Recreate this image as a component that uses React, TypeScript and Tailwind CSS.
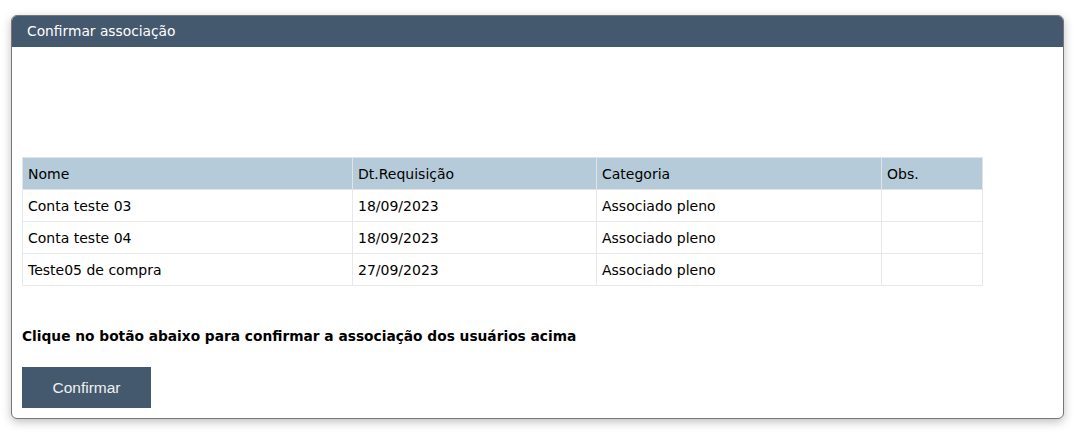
import React from "react";

const rows = [
  { nome: "Conta teste 03", data: "18/09/2023", categoria: "Associado pleno", obs: "" },
  { nome: "Conta teste 04", data: "18/09/2023", categoria: "Associado pleno", obs: "" },
  { nome: "Teste05 de compra", data: "27/09/2023", categoria: "Associado pleno", obs: "" },
];

export default function App() {
  return (
    <div className="min-h-[440px] w-[1076px] bg-white pl-[11px] pt-[15px] font-['DejaVu_Sans',Verdana,sans-serif] text-[14px] text-black">
      <div className="w-[1053px] h-[404px] rounded-[6px] border border-[#7a7474] bg-white shadow-[0_3px_10px_rgba(0,0,0,0.25)] overflow-hidden">
        <div className="h-[31px] bg-[#44596e] pl-[15px] flex items-center text-white text-[13.8px]">
          Confirmar associação
        </div>
        <div className="px-[10px] pt-[110px]">
          <table className="w-[960px] border-collapse table-fixed">
            <colgroup>
              <col className="w-[330px]" />
              <col className="w-[244px]" />
              <col className="w-[285px]" />
              <col className="w-[101px]" />
            </colgroup>
            <thead>
              <tr className="h-[32px] bg-[#b6cbd9]">
                {["Nome", "Dt.Requisição", "Categoria", "Obs."].map((h) => (
                  <th key={h} className="border border-[#e3e3e3] px-[5px] pt-[1px] text-left font-normal">
                    {h}
                  </th>
                ))}
              </tr>
            </thead>
            <tbody>
              {rows.map((r) => (
                <tr key={r.nome} className="h-[32px]">
                  <td className="border border-[#e8e8e8] px-[5px] pt-[1px]">{r.nome}</td>
                  <td className="border border-[#e8e8e8] px-[5px] pt-[1px]">{r.data}</td>
                  <td className="border border-[#e8e8e8] px-[5px] pt-[1px]">{r.categoria}</td>
                  <td className="border border-[#e8e8e8] px-[5px] pt-[1px]">{r.obs}</td>
                </tr>
              ))}
            </tbody>
          </table>
          <p className="mt-[42px] h-[17px] leading-[17px] font-bold text-[13.75px]">
            Clique no botão abaixo para confirmar a associação dos usuários acima
          </p>
          <button className="mt-[22px] w-[129px] h-[41px] bg-[#44596e] text-[#f0f0f0] text-[15.5px] font-['Liberation_Sans',Arial,sans-serif]">
            Confirmar
          </button>
        </div>
      </div>
    </div>
  );
}
